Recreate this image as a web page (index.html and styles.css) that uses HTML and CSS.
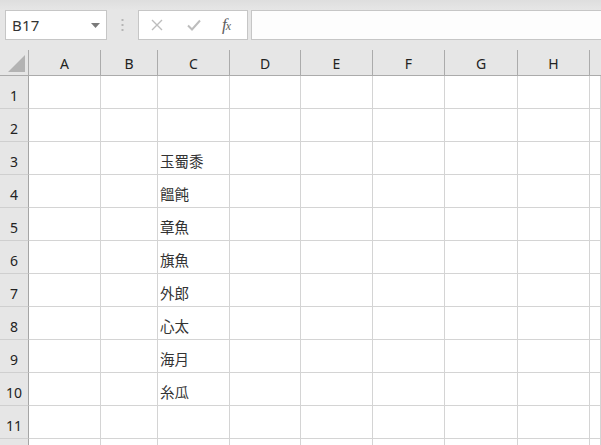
FILE: index.html
```html
<!DOCTYPE html>
<html lang="ja">
<head>
<meta charset="utf-8">
<title>Sheet</title>
<link rel="stylesheet" href="styles.css">
</head>
<body>
<div class="toolbar">
  <div class="namebox">
    <span class="ref">B17</span>
    <svg class="caret" width="9" height="5" viewBox="0 0 9 5"><path d="M0 0H9L4.5 5Z" fill="#7a7a7a"/></svg>
  </div>
  <div class="grip">
    <svg width="3" height="12" viewBox="0 0 3 12"><rect x="0.5" y="0" width="2" height="2" fill="#b5b5b5"/><rect x="0.5" y="5" width="2" height="2" fill="#b5b5b5"/><rect x="0.5" y="10" width="2" height="2" fill="#b5b5b5"/></svg>
  </div>
  <div class="fxbox">
    <svg class="btn" width="12" height="12" viewBox="0 0 12 12"><path d="M1 1L11 11M11 1L1 11" stroke="#bdbdbd" stroke-width="1.4" fill="none"/></svg>
    <svg class="btn" width="14" height="12" viewBox="0 0 14 12"><path d="M1 6.5L5 10.5L13 1.5" stroke="#bdbdbd" stroke-width="2" fill="none"/></svg>
    <span class="fx">f<span class="x">x</span></span>
  </div>
  <div class="formula"></div>
</div>
<div class="sheet">
  <div class="corner"><span class="tri"></span></div>
  <div class="ch">A</div><div class="ch">B</div><div class="ch">C</div><div class="ch">D</div><div class="ch">E</div><div class="ch">F</div><div class="ch">G</div><div class="ch">H</div><div class="ch last"></div>

  <div class="rh">1</div><div class="c"></div><div class="c"></div><div class="c"></div><div class="c"></div><div class="c"></div><div class="c"></div><div class="c"></div><div class="c"></div><div class="c"></div>
  <div class="rh">2</div><div class="c"></div><div class="c"></div><div class="c"></div><div class="c"></div><div class="c"></div><div class="c"></div><div class="c"></div><div class="c"></div><div class="c"></div>
  <div class="rh">3</div><div class="c"></div><div class="c"></div><div class="c">玉蜀黍</div><div class="c"></div><div class="c"></div><div class="c"></div><div class="c"></div><div class="c"></div><div class="c"></div>
  <div class="rh">4</div><div class="c"></div><div class="c"></div><div class="c">饂飩</div><div class="c"></div><div class="c"></div><div class="c"></div><div class="c"></div><div class="c"></div><div class="c"></div>
  <div class="rh">5</div><div class="c"></div><div class="c"></div><div class="c">章魚</div><div class="c"></div><div class="c"></div><div class="c"></div><div class="c"></div><div class="c"></div><div class="c"></div>
  <div class="rh">6</div><div class="c"></div><div class="c"></div><div class="c">旗魚</div><div class="c"></div><div class="c"></div><div class="c"></div><div class="c"></div><div class="c"></div><div class="c"></div>
  <div class="rh">7</div><div class="c"></div><div class="c"></div><div class="c">外郎</div><div class="c"></div><div class="c"></div><div class="c"></div><div class="c"></div><div class="c"></div><div class="c"></div>
  <div class="rh">8</div><div class="c"></div><div class="c"></div><div class="c">心太</div><div class="c"></div><div class="c"></div><div class="c"></div><div class="c"></div><div class="c"></div><div class="c"></div>
  <div class="rh">9</div><div class="c"></div><div class="c"></div><div class="c">海月</div><div class="c"></div><div class="c"></div><div class="c"></div><div class="c"></div><div class="c"></div><div class="c"></div>
  <div class="rh">10</div><div class="c"></div><div class="c"></div><div class="c">糸瓜</div><div class="c"></div><div class="c"></div><div class="c"></div><div class="c"></div><div class="c"></div><div class="c"></div>
  <div class="rh">11</div><div class="c"></div><div class="c"></div><div class="c"></div><div class="c"></div><div class="c"></div><div class="c"></div><div class="c"></div><div class="c"></div><div class="c"></div>
  <div class="rh"></div><div class="c"></div><div class="c"></div><div class="c"></div><div class="c"></div><div class="c"></div><div class="c"></div><div class="c"></div><div class="c"></div><div class="c"></div>
</div>
</body>
</html>
```

FILE: styles.css
```css
html, body {
  margin: 0;
  padding: 0;
  width: 601px;
  height: 445px;
  overflow: hidden;
  background: #ffffff;
  font-family: "Noto Sans", "Noto Sans CJK JP", sans-serif;
  color: #222;
}

.toolbar {
  height: 50px;
  box-sizing: border-box;
  padding: 10px 0 10px 5px;
  display: flex;
  align-items: stretch;
  background: linear-gradient(#dedede 0px, #e6e6e6 10px, #e6e6e6 100%);
}

.namebox {
  width: 102px;
  box-sizing: border-box;
  background: #ffffff;
  border: 1px solid #c6c6c6;
  display: flex;
  align-items: center;
  justify-content: space-between;
  padding: 0 6px 0 6px;
}

.ref {
  font-family: "Noto Sans", sans-serif;
  font-size: 15px;
  color: #333;
  letter-spacing: 0.2px;
}

.caret {
  display: block;
}

.grip {
  width: 31px;
  display: flex;
  align-items: center;
  justify-content: center;
}

.grip svg {
  display: block;
}

.fxbox {
  width: 110px;
  box-sizing: border-box;
  background: #ffffff;
  border: 1px solid #c6c6c6;
  display: flex;
  align-items: center;
  padding: 0 0 0 12px;
  gap: 24px;
}

.btn {
  display: block;
}

.fx {
  font-family: "Liberation Serif", serif;
  font-style: italic;
  font-size: 17px;
  color: #5e5e5e;
  margin-left: -3px;
  letter-spacing: -1px;
}

.fx .x {
  font-size: 12px;
}

.formula {
  flex: 1;
  margin-left: 3px;
  background: #fdfdfd;
  border: 1px solid #c6c6c6;
  border-right: none;
}

.sheet {
  display: grid;
  grid-template-columns: 29px 72px 57px 72px 71px 72px 72px 73px 72px 1fr;
  grid-template-rows: 26px repeat(11, 33px) 7px;
  overflow: hidden;
}

.corner {
  background: #e6e6e6;
  border-right: 1px solid #ababab;
  border-bottom: 1px solid #ababab;
  position: relative;
}

.tri {
  position: absolute;
  right: 3px;
  bottom: 3px;
  width: 0;
  height: 0;
  border-left: 17px solid transparent;
  border-bottom: 17px solid #b3b3b3;
}

.ch {
  background: #e6e6e6;
  border-right: 1px solid #ababab;
  border-bottom: 1px solid #ababab;
  display: flex;
  align-items: center;
  justify-content: center;
  font-size: 14px;
  color: #222;
  padding-top: 1px;
}

.ch.last {
  border-right: none;
}

.rh {
  background: #e6e6e6;
  border-right: 1px solid #a5a5a5;
  border-bottom: 1px solid #cfcfcf;
  display: flex;
  align-items: flex-end;
  justify-content: center;
  padding-bottom: 3px;
  box-sizing: border-box;
  font-size: 14px;
  color: #222;
}

.c {
  border-right: 1px solid #d4d4d4;
  border-bottom: 1px solid #d4d4d4;
  display: flex;
  align-items: flex-end;
  padding: 0 0 3px 2px;
  box-sizing: border-box;
  font-family: "Noto Sans CJK JP", sans-serif;
  font-size: 14.5px;
  color: #333;
  white-space: nowrap;
}
```
